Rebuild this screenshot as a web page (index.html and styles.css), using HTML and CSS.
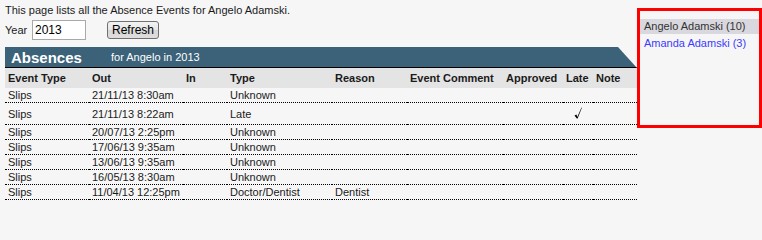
FILE: index.html
```html
<!DOCTYPE html>
<html>
<head>
<meta charset="utf-8">
<link rel="stylesheet" href="styles.css">
</head>
<body>
<div class="page">
  <div class="main">
    <p class="intro">This page lists all the Absence Events for Angelo Adamski.</p>
    <div class="yearrow">
      <span class="label">Year</span>
      <input class="year" type="text" value="2013">
      <button class="refresh">Refresh</button>
    </div>
    <div class="band">
      <span class="band-title">Absences</span>
      <span class="band-sub">for Angelo in 2013</span>
    </div>
    <table class="grid">
      <colgroup>
        <col class="c1"><col class="c2"><col class="c3"><col class="c4"><col class="c5"><col class="c6"><col class="c7"><col class="c8"><col class="c9">
      </colgroup>
      <thead>
        <tr><th>Event Type</th><th>Out</th><th>In</th><th>Type</th><th>Reason</th><th>Event Comment</th><th>Approved</th><th>Late</th><th>Note</th></tr>
      </thead>
      <tbody>
        <tr><td>Slips</td><td>21/11/13 8:30am</td><td></td><td>Unknown</td><td></td><td></td><td></td><td></td><td></td></tr>
        <tr><td>Slips</td><td>21/11/13 8:22am</td><td></td><td>Late</td><td></td><td></td><td></td><td class="late"><svg class="check" viewBox="0 0 8 12" width="8" height="12"><path d="M0.5 8.5 L2.5 7.5 L3.3 10 L7.5 0.5 L7.9 0.7 L3.6 11.6 L2.8 11.6 Z" fill="#000"/></svg></td><td></td></tr>
        <tr><td>Slips</td><td>20/07/13 2:25pm</td><td></td><td>Unknown</td><td></td><td></td><td></td><td></td><td></td></tr>
        <tr><td>Slips</td><td>17/06/13 9:35am</td><td></td><td>Unknown</td><td></td><td></td><td></td><td></td><td></td></tr>
        <tr><td>Slips</td><td>13/06/13 9:35am</td><td></td><td>Unknown</td><td></td><td></td><td></td><td></td><td></td></tr>
        <tr><td>Slips</td><td>16/05/13 8:30am</td><td></td><td>Unknown</td><td></td><td></td><td></td><td></td><td></td></tr>
        <tr><td>Slips</td><td>11/04/13 12:25pm</td><td></td><td>Doctor/Dentist</td><td>Dentist</td><td></td><td></td><td></td><td></td></tr>
      </tbody>
    </table>
  </div>
  <div class="panel">
    <div class="person current">Angelo Adamski (10)</div>
    <div class="person link">Amanda Adamski (3)</div>
  </div>
</div>
</body>
</html>
```

FILE: styles.css
```css
html, body {
  margin: 0;
  padding: 0;
  background: #f6f6f6;
}
body {
  font-family: "Liberation Sans", Arial, sans-serif;
  font-size: 11px;
  color: #1a1a1a;
}
.page {
  display: flex;
  align-items: flex-start;
  padding-left: 5px;
}
.main {
  width: 632px;
}
.intro {
  margin: 0;
  padding-top: 3px;
  line-height: 14px;
}
.yearrow {
  display: flex;
  align-items: center;
  margin-top: 3px;
  height: 20px;
}
.label {
  width: 27px;
}
.year {
  box-sizing: border-box;
  width: 54px;
  height: 20px;
  margin: 0;
  padding: 1px 2px;
  border: 1px solid #a9a9a9;
  background: #fff;
  font-family: "Liberation Sans", Arial, sans-serif;
  font-size: 12px;
  color: #000;
}
.refresh {
  box-sizing: border-box;
  margin-left: 21px;
  width: 52px;
  height: 18px;
  padding: 0;
  border: 1px solid #707070;
  border-radius: 3px;
  background: linear-gradient(#f2f2f2, #e6e6e6 50%, #d6d6d6 51%, #dedede);
  font-family: "Liberation Sans", Arial, sans-serif;
  font-size: 12px;
  color: #000;
}
.band {
  margin-top: 7px;
  height: 20px;
  background: #3b6279;
  color: #fff;
  display: flex;
  align-items: center;
  padding-left: 6px;
  clip-path: polygon(0 0, calc(100% - 19px) 0, 100% 100%, 0 100%);
  border-bottom: 1px solid #000;
}
.band-title {
  font-weight: bold;
  font-size: 15px;
  width: 100px;
}
.band-sub {
  font-size: 11px;
}
.grid {
  width: 632px;
  border-collapse: collapse;
  table-layout: fixed;
}
.c1 { width: 84px; }
.c2 { width: 94px; }
.c3 { width: 44px; }
.c4 { width: 105px; }
.c5 { width: 75px; }
.c6 { width: 96px; }
.c7 { width: 60px; }
.c8 { width: 30px; }
.c9 { width: 44px; }
.grid th {
  background: #e4e4e4;
  text-align: left;
  font-weight: bold;
  height: 20px;
  padding: 0 0 0 3px;
  white-space: nowrap;
}
.grid td {
  padding: 0 0 0 3px;
  height: 14px;
  line-height: 14px;
  border-bottom: 1px dotted #000;
  white-space: nowrap;
}
.grid td.late {
  padding: 3px 0 4px 0;
  text-align: center;
}
.check {
  display: block;
  margin: 0 auto;
  position: relative;
  left: 0;
}
.panel {
  box-sizing: border-box;
  margin-top: 8px;
  width: 125px;
  height: 120px;
  border: 3px solid #ff0000;
  padding-top: 8px;
}
.person {
  padding-left: 4px;
  line-height: 15px;
  height: 15px;
  margin-bottom: 2px;
}
.current {
  background: #d8d8de;
  color: #333;
}
.link {
  color: #3b3bff;
}
```
